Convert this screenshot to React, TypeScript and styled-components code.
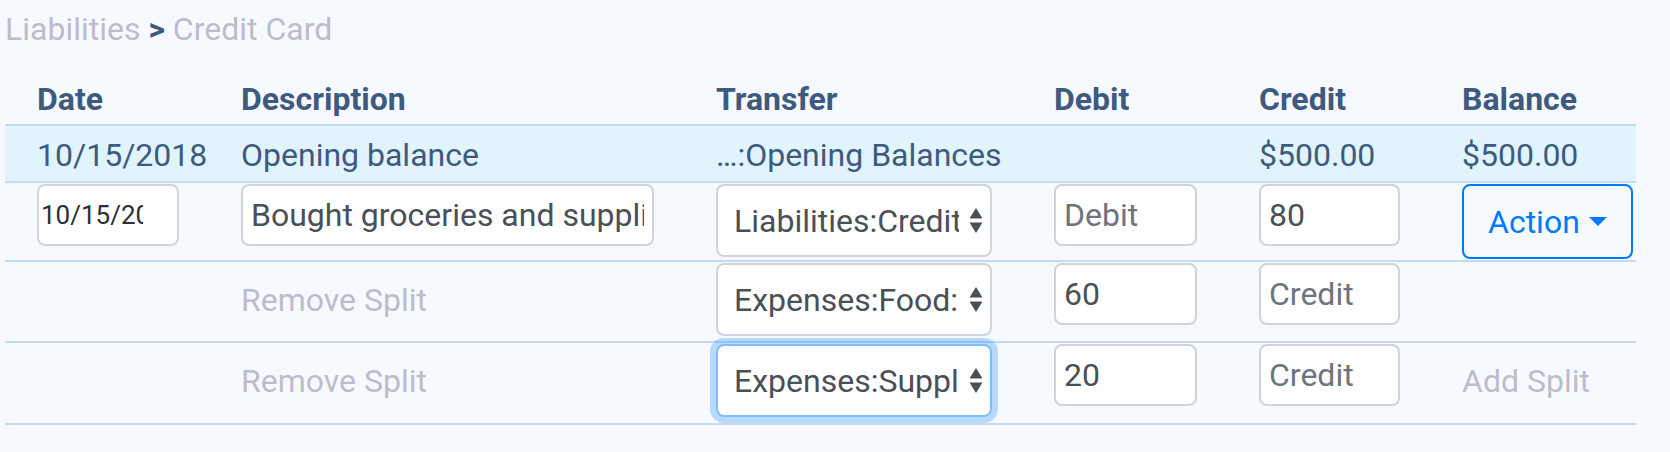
import React from "react";
import styled, { createGlobalStyle } from "styled-components";

const colors = {
  page: "#f6faff",
  heading: "#3e5b7f",
  muted: "#bdbccc",
  rule: "#c3daf0",
  highlight: "#e1f3fd",
  inputText: "#495057",
  placeholder: "#6c757d",
  inputBorder: "#ced4da",
  primary: "#007bff",
};

const GlobalStyle = createGlobalStyle`
  body {
    margin: 0;
    background: ${colors.page};
    font-family: Roboto, "Liberation Sans", Arial, sans-serif;
  }
`;

const COLUMNS = "204px 475px 338px 205px 203px 206px";

function SelectArrows() {
  return (
    <svg width="14" height="26" viewBox="0 0 14 26" aria-hidden="true">
      <polygon points="7,0 13.5,10.5 0.5,10.5" fill="#4a5058" />
      <polygon points="0.5,14.5 13.5,14.5 7,25" fill="#4a5058" />
    </svg>
  );
}

function App() {
  return (
    <>
      <GlobalStyle />
      <Page>
        <Breadcrumb>
          Liabilities <Separator>&gt;</Separator> Credit Card
        </Breadcrumb>

        <HeaderRow>
          <Cell>Date</Cell>
          <Cell>Description</Cell>
          <Cell>Transfer</Cell>
          <Cell>Debit</Cell>
          <Cell>Credit</Cell>
          <Cell>Balance</Cell>
        </HeaderRow>

        <SummaryRow>
          <Cell>10/15/2018</Cell>
          <Cell>Opening balance</Cell>
          <Cell>…:Opening Balances</Cell>
          <Cell />
          <Cell>$500.00</Cell>
          <Cell>$500.00</Cell>
        </SummaryRow>

        <EditRow $height={76}>
          <Cell>
            <DateInput type="text" defaultValue="10/15/2018" />
          </Cell>
          <Cell>
            <TextInput type="text" defaultValue="Bought groceries and supplies" />
          </Cell>
          <Cell>
            <SelectWrap>
              <Select defaultValue="credit">
                <option value="credit">Liabilities:Credit Card</option>
              </Select>
              <ArrowSlot>
                <SelectArrows />
              </ArrowSlot>
            </SelectWrap>
          </Cell>
          <Cell>
            <TextInput type="text" placeholder="Debit" />
          </Cell>
          <Cell>
            <TextInput type="text" defaultValue="80" />
          </Cell>
          <Cell>
            <ActionButton type="button">
              Action <Caret />
            </ActionButton>
          </Cell>
        </EditRow>

        <EditRow $height={78}>
          <Cell />
          <Cell>
            <LinkButton type="button">Remove Split</LinkButton>
          </Cell>
          <Cell>
            <SelectWrap>
              <Select defaultValue="food">
                <option value="food">Expenses:Food:Groceries</option>
              </Select>
              <ArrowSlot>
                <SelectArrows />
              </ArrowSlot>
            </SelectWrap>
          </Cell>
          <Cell>
            <TextInput type="text" defaultValue="60" />
          </Cell>
          <Cell>
            <TextInput type="text" placeholder="Credit" />
          </Cell>
          <Cell />
        </EditRow>

        <EditRow $height={79}>
          <Cell />
          <Cell>
            <LinkButton type="button">Remove Split</LinkButton>
          </Cell>
          <Cell>
            <SelectWrap>
              <Select defaultValue="supplies" $focused>
                <option value="supplies">Expenses:Supplies</option>
              </Select>
              <ArrowSlot>
                <SelectArrows />
              </ArrowSlot>
            </SelectWrap>
          </Cell>
          <Cell>
            <TextInput type="text" defaultValue="20" />
          </Cell>
          <Cell>
            <TextInput type="text" placeholder="Credit" />
          </Cell>
          <Cell>
            <LinkButton type="button">Add Split</LinkButton>
          </Cell>
        </EditRow>
      </Page>
    </>
  );
}

const Page = styled.div`
  min-height: 452px;
  padding: 0 34px 0 5px;
  background: ${colors.page};
  font-size: 32px;
  line-height: 48px;
  color: ${colors.heading};
`;

const Breadcrumb = styled.div`
  padding: 5px 0 5px 0;
  color: ${colors.muted};
`;

const Separator = styled.span`
  color: ${colors.heading};
  font-weight: 700;
`;

const Row = styled.div`
  display: grid;
  grid-template-columns: ${COLUMNS};
  border-bottom: 2px solid ${colors.rule};
`;

const HeaderRow = styled(Row)`
  height: 68px;
  box-sizing: border-box;
  padding-top: 16px;
  font-weight: 700;
`;

const SummaryRow = styled(Row)`
  height: 55px;
  box-sizing: content-box;
  align-items: center;
  background: ${colors.highlight};

  & > div {
    padding-top: 3px;
  }
`;

const EditRow = styled(Row)<{ $height: number }>`
  height: ${(p) => p.$height}px;
  padding-top: 1px;
  box-sizing: content-box;
  align-items: start;
`;

const Cell = styled.div`
  display: flex;
  align-items: center;
  min-width: 0;
  padding: 0 30px 0 32px;
  white-space: nowrap;
`;

const fieldBase = `
  box-sizing: border-box;
  width: 100%;
  background: #fff;
  border: 2px solid ${colors.inputBorder};
  border-radius: 8px;
  font-family: Roboto, "Liberation Sans", Arial, sans-serif;
  outline: none;
`;

const TextInput = styled.input`
  ${fieldBase}
  height: 62px;
  padding: 0 8px;
  font-size: 32px;
  color: ${colors.inputText};

  &::placeholder {
    color: ${colors.placeholder};
    opacity: 1;
  }
`;

const DateInput = styled.input`
  ${fieldBase}
  height: 62px;
  padding: 0 34px 0 2px;
  font-size: 26px;
  color: #2b2f33;
`;

const SelectWrap = styled.div`
  position: relative;
  width: 100%;
`;

const Select = styled.select<{ $focused?: boolean }>`
  ${fieldBase}
  display: block;
  height: 73px;
  padding: 0 31px 0 16px;
  appearance: none;
  -webkit-appearance: none;
  font-size: 32px;
  color: ${colors.inputText};
  border-color: ${(p) => (p.$focused ? "#80bdff" : colors.inputBorder)};
  box-shadow: ${(p) =>
    p.$focused ? "0 0 0 6px rgba(0, 123, 255, 0.25)" : "none"};
`;

const ArrowSlot = styled.span`
  position: absolute;
  right: 9px;
  top: 50%;
  transform: translateY(-50%);
  display: flex;
  pointer-events: none;
`;

const ActionButton = styled.button`
  display: inline-flex;
  align-items: center;
  height: 75px;
  padding: 0 24px;
  border: 2px solid ${colors.primary};
  border-radius: 8px;
  background: transparent;
  color: ${colors.primary};
  font-family: Roboto, "Liberation Sans", Arial, sans-serif;
  font-size: 32px;
  white-space: nowrap;
  cursor: pointer;
`;

const Caret = styled.span`
  display: inline-block;
  margin-left: 9px;
  border-top: 9px solid ${colors.primary};
  border-left: 9px solid transparent;
  border-right: 9px solid transparent;
`;

const LinkButton = styled.button`
  display: flex;
  align-items: center;
  height: 73px;
  padding: 0;
  border: none;
  background: none;
  color: ${colors.muted};
  font-family: Roboto, "Liberation Sans", Arial, sans-serif;
  font-size: 32px;
  white-space: nowrap;
  cursor: pointer;
`;

export default App;
